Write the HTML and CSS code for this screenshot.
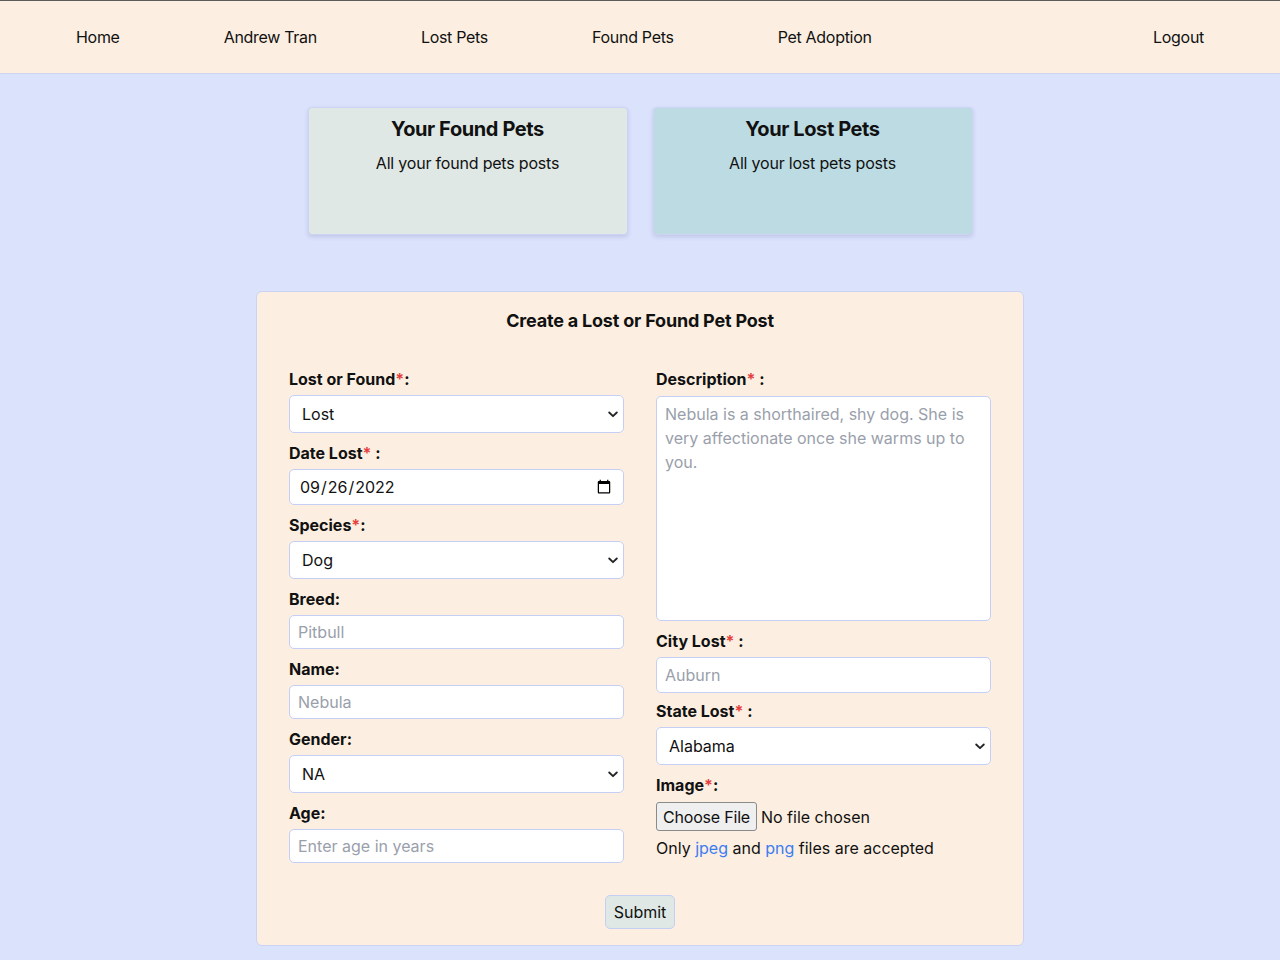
FILE: index.html
```html
<!DOCTYPE html>
<html lang="en">
<head>
<meta charset="utf-8">
<title>Create a Lost or Found Pet Post</title>
<link rel="stylesheet" href="styles.css">
</head>
<body>
<nav class="navbar">
  <div class="nav-left">
    <a class="nav-link" href="#">Home</a>
    <a class="nav-link" href="#">Andrew Tran</a>
    <a class="nav-link" href="#">Lost Pets</a>
    <a class="nav-link" href="#">Found Pets</a>
    <a class="nav-link" href="#">Pet Adoption</a>
  </div>
  <a class="nav-link" href="#">Logout</a>
</nav>

<main class="page">
  <section class="cards">
    <a class="card card-found" href="#">
      <h2 class="card-title">Your Found Pets</h2>
      <p class="card-text">All your found pets posts</p>
    </a>
    <a class="card card-lost" href="#">
      <h2 class="card-title">Your Lost Pets</h2>
      <p class="card-text">All your lost pets posts</p>
    </a>
  </section>

  <form class="post-form">
    <h1 class="form-title">Create a Lost or Found Pet Post</h1>
    <div class="form-grid">
      <div class="col">
        <div class="field">
          <label class="label">Lost or Found<span class="req">*</span>:</label>
          <select class="control select"><option>Lost</option><option>Found</option></select>
        </div>
        <div class="field">
          <label class="label">Date Lost<span class="req">*</span> :</label>
          <input class="control date" type="date" value="2022-09-26">
        </div>
        <div class="field">
          <label class="label">Species<span class="req">*</span>:</label>
          <select class="control select"><option>Dog</option><option>Cat</option></select>
        </div>
        <div class="field">
          <label class="label">Breed:</label>
          <input class="control text" type="text" placeholder="Pitbull">
        </div>
        <div class="field">
          <label class="label">Name:</label>
          <input class="control text" type="text" placeholder="Nebula">
        </div>
        <div class="field">
          <label class="label">Gender:</label>
          <select class="control select"><option>NA</option><option>Male</option><option>Female</option></select>
        </div>
        <div class="field">
          <label class="label">Age:</label>
          <input class="control text" type="text" placeholder="Enter age in years">
        </div>
      </div>
      <div class="col">
        <div class="field">
          <label class="label">Description<span class="req">*</span> :</label>
          <textarea class="control textarea" placeholder="Nebula is a shorthaired, shy dog. She is very affectionate once she warms up to you."></textarea>
        </div>
        <div class="field">
          <label class="label">City Lost<span class="req">*</span> :</label>
          <input class="control text city" type="text" placeholder="Auburn">
        </div>
        <div class="field field-state">
          <label class="label">State Lost<span class="req">*</span> :</label>
          <select class="control select"><option>Alabama</option><option>Alaska</option></select>
        </div>
        <div class="field">
          <label class="label">Image<span class="req">*</span>:</label>
          <input class="file" type="file">
          <p class="hint">Only <span class="link">jpeg</span> and <span class="link">png</span> files are accepted</p>
        </div>
      </div>
    </div>
    <div class="actions">
      <button class="submit" type="button">Submit</button>
    </div>
  </form>
</main>
</body>
</html>
```

FILE: styles.css
```css
* {
  box-sizing: border-box;
}

html, body {
  margin: 0;
  padding: 0;
}

body {
  background: #dbe2fc;
  font-family: Inter, "Noto Sans", "Liberation Sans", sans-serif;
  font-size: 16px;
  line-height: 24px;
  color: #111;
  min-height: 960px;
}

.navbar {
  height: 74px;
  background: #fcefe1;
  border-top: 1px solid #5b5b5b;
  border-bottom: 1px solid #cfd5ee;
  display: flex;
  align-items: center;
  justify-content: space-between;
  padding: 0 24px;
}

.nav-left {
  display: flex;
  align-items: center;
}

.nav-link {
  color: #111;
  text-decoration: none;
  padding: 0 52px;
  font-size: 16px;
  letter-spacing: -0.3px;
}

.page {
  padding-top: 33px;
}

.cards {
  display: flex;
  justify-content: center;
  gap: 25px;
}

.card {
  width: 320px;
  height: 128px;
  border: 1px solid #cdd3f3;
  border-radius: 4px;
  box-shadow: 0 2px 4px rgba(70, 80, 140, 0.18);
  padding-top: 7px;
  text-align: center;
  text-decoration: none;
  color: #111;
}

.card-found {
  background: #dfe8e4;
}

.card-lost {
  background: #bddbe3;
}

.card-title {
  margin: 0;
  font-size: 20px;
  line-height: 28px;
  font-weight: 700;
  letter-spacing: -0.4px;
}

.card-text {
  margin: 8px 0 0;
  font-size: 16px;
  line-height: 24px;
  letter-spacing: -0.2px;
}

.post-form {
  width: 768px;
  margin: 56px auto 0;
  background: #fcefe1;
  border: 1px solid #cbd3f5;
  border-radius: 6px;
  padding: 15px 32px 16px;
}

.form-title {
  margin: 0;
  text-align: center;
  font-size: 18px;
  line-height: 28px;
  font-weight: 700;
  letter-spacing: -0.2px;
}

.form-grid {
  margin-top: 32px;
  display: grid;
  grid-template-columns: minmax(0, 1fr) minmax(0, 1fr);
  column-gap: 32px;
}

.col {
  display: flex;
  flex-direction: column;
  gap: 8px;
  min-width: 0;
}

.field {
  display: flex;
  flex-direction: column;
}

.field-state {
  margin-top: -2px;
}

.label {
  font-weight: 700;
  font-size: 16px;
  line-height: 24px;
  margin-bottom: 4px;
}

.req {
  color: #e53e3e;
}

.control {
  width: 100%;
  background-color: #fff;
  border: 1px solid #c5cff6;
  border-radius: 5px;
  font-family: inherit;
  font-size: 16px;
  color: #111;
  outline: none;
}

.control::placeholder {
  color: #9aa0ab;
}

.select {
  appearance: none;
  -webkit-appearance: none;
  height: 38px;
  padding: 0 28px 0 12px;
  background-image: url("data:image/svg+xml,%3Csvg xmlns='http://www.w3.org/2000/svg' width='10' height='7' viewBox='0 0 10 7'%3E%3Cpath d='M1.2 1.5 L5 5.2 L8.8 1.5' fill='none' stroke='%23222' stroke-width='1.8' stroke-linecap='round' stroke-linejoin='round'/%3E%3C/svg%3E");
  background-repeat: no-repeat;
  background-position: right 5px center;
  background-size: 10px 7px;
}

.date {
  height: 36px;
  padding: 0 9px;
}

.date::-webkit-calendar-picker-indicator {
  margin-right: 0;
}

.text {
  height: 34px;
  padding: 0 8px;
}

.city {
  height: 36px;
}

.textarea {
  height: 225px;
  padding: 5px 8px;
  resize: none;
  line-height: 24px;
  display: block;
  margin-top: 1px;
}

.file {
  font-family: inherit;
  font-size: 16px;
  color: #111;
  height: 30px;
  margin-top: 1px;
}

.file::file-selector-button {
  font-family: inherit;
  font-size: 16px;
  color: #111;
  background: #efefef;
  border: 1px solid #8a8a8a;
  border-radius: 3px;
  padding: 2px 6px;
  height: 29px;
  margin-right: 4px;
  letter-spacing: -0.2px;
}

.hint {
  margin: 4px 0 0;
  font-size: 16px;
  line-height: 24px;
}

.link {
  color: #3b7df0;
}

.actions {
  display: flex;
  justify-content: center;
  margin-top: 32px;
}

.submit {
  font-family: inherit;
  font-size: 16px;
  color: #111;
  background: #dfe8e4;
  border: 1px solid #c5cff6;
  border-radius: 5px;
  height: 34px;
  padding: 0 8px;
}
```
